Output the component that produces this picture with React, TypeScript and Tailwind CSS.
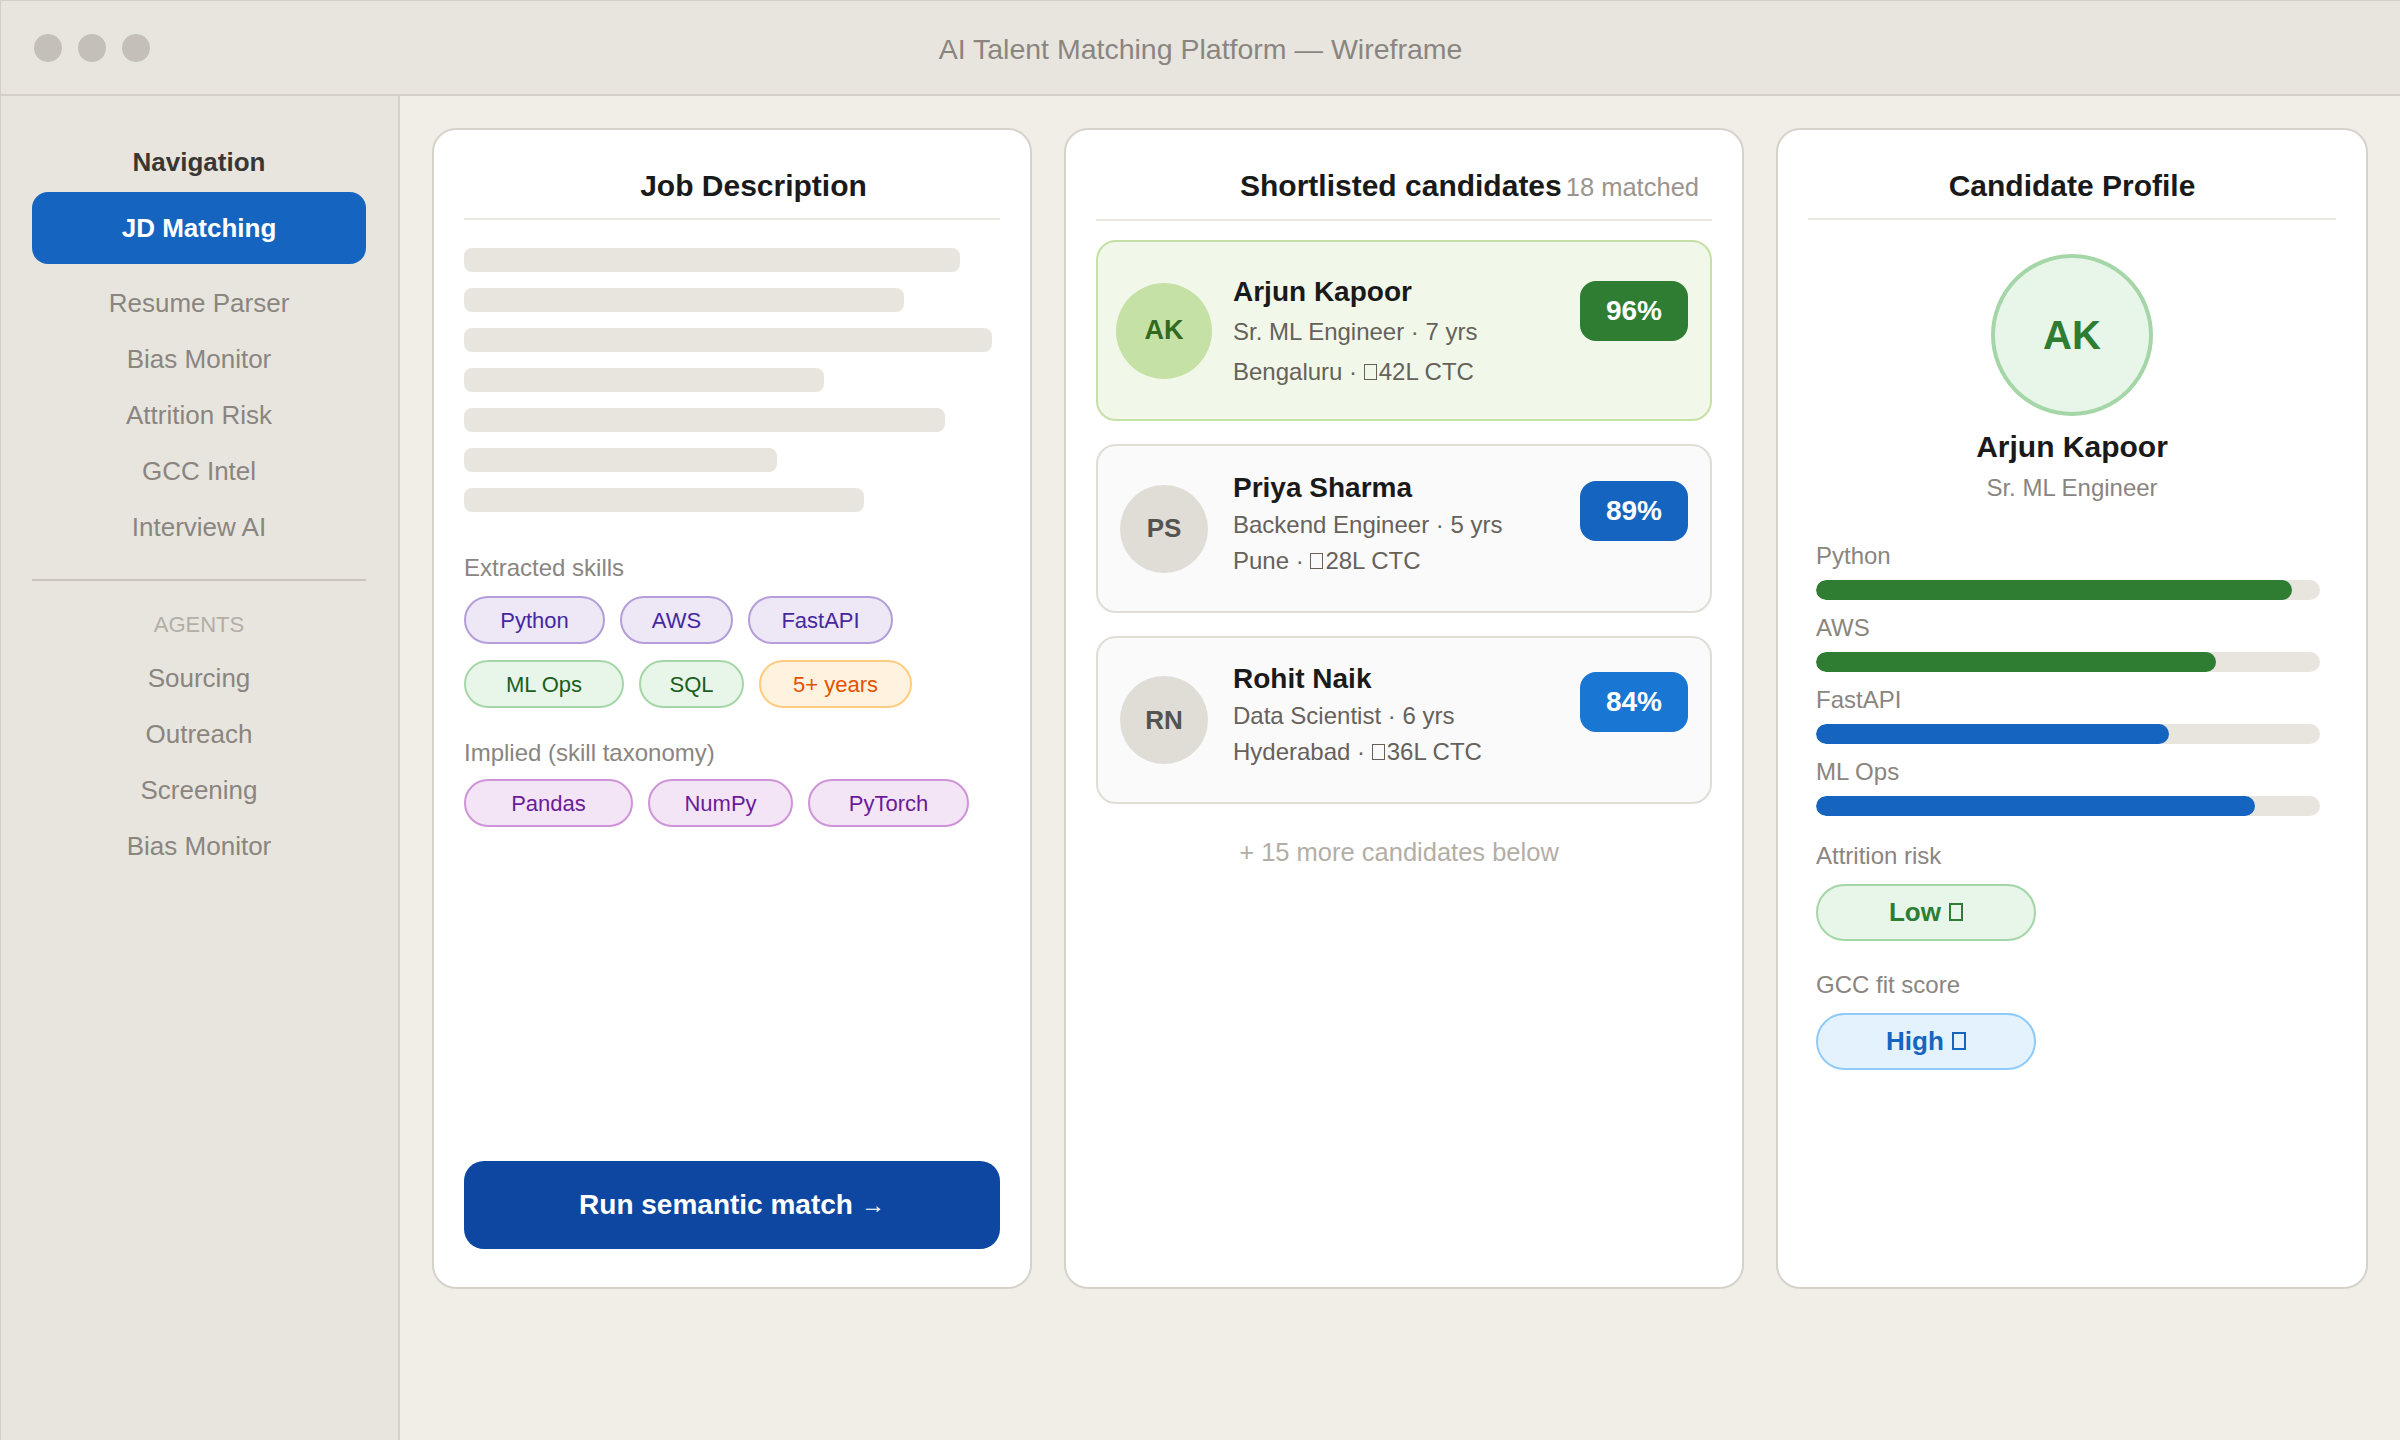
import React from "react";

const navItems = ["Resume Parser", "Bias Monitor", "Attrition Risk", "GCC Intel", "Interview AI"];
const agentItems = ["Sourcing", "Outreach", "Screening", "Bias Monitor"];
const skeleton = [496, 440, 528, 360, 481, 313, 400];

const purple = "bg-[#ede7f6] border-[#b39ddb] text-[#4527a0]";
const green = "bg-[#e8f5e9] border-[#a5d6a7] text-[#1b5e20]";
const orange = "bg-[#fff3e0] border-[#ffcc80] text-[#e65100]";
const violet = "bg-[#f3e5f5] border-[#ce93d8] text-[#6a1b9a]";

const row1 = [
  { t: "Python", w: 141, c: purple },
  { t: "AWS", w: 113, c: purple },
  { t: "FastAPI", w: 145, c: purple },
];
const row2 = [
  { t: "ML Ops", w: 160, c: green },
  { t: "SQL", w: 105, c: green },
  { t: "5+ years", w: 153, c: orange },
];
const row3 = [
  { t: "Pandas", w: 169, c: violet },
  { t: "NumPy", w: 145, c: violet },
  { t: "PyTorch", w: 161, c: violet },
];

const skills = [
  { n: "Python", v: 94.5, c: "bg-[#2e7d32]" },
  { n: "AWS", v: 79.3, c: "bg-[#2e7d32]" },
  { n: "FastAPI", v: 70, c: "bg-[#1565c0]" },
  { n: "ML Ops", v: 87.2, c: "bg-[#1565c0]" },
];

function Chip({ t, w, c }: { t: string; w: number; c: string }) {
  return (
    <div
      className={`h-[48px] rounded-full border-2 flex items-center justify-center text-[22px] ${c}`}
      style={{ width: w }}
    >
      {t}
    </div>
  );
}

/* missing-glyph box, as the reference shows it */
function Tofu({ big }: { big?: boolean }) {
  return big ? (
    <span className="inline-block w-[14px] h-[18px] border-2 border-current align-baseline ml-[1px]" />
  ) : (
    <span className="inline-block w-[13px] h-[16px] border-[1.5px] border-current align-baseline mr-[2px]" />
  );
}

export default function App() {
  return (
    <div className="w-[2400px] h-[1440px] flex flex-col bg-[#f1eee8] font-['Liberation_Sans',Arial,sans-serif] border-t border-l border-[#d3cfc7] overflow-hidden">
      {/* Title bar */}
      <header className="h-[95px] shrink-0 grid grid-cols-[1fr_auto_1fr] items-center bg-[#e8e5df] border-b-2 border-[#d3cfc7] px-[33px]">
        <div className="flex gap-[16px]">
          <span className="w-[28px] h-[28px] rounded-full bg-[#c4c0b9]" />
          <span className="w-[28px] h-[28px] rounded-full bg-[#c4c0b9]" />
          <span className="w-[28px] h-[28px] rounded-full bg-[#c4c0b9]" />
        </div>
        <div className="text-[28.5px] text-[#8a8580] pt-[4px]">AI Talent Matching Platform — Wireframe</div>
        <div />
      </header>

      <div className="flex flex-1 min-h-0">
        {/* Sidebar */}
        <aside className="w-[399px] shrink-0 bg-[#e8e5df] border-r-2 border-[#d6d2ca] pl-[31px] pr-[32px] pt-[48px] flex flex-col">
          <div className="text-[26px] font-bold leading-[36px] text-center text-[#3a3733]">Navigation</div>
          <div className="mt-[12px] h-[72px] rounded-[16px] bg-[#1565c0] text-white font-bold text-[26px] flex items-center justify-center">
            JD Matching
          </div>
          <div className="mt-[11px] flex flex-col">
            {navItems.map((n) => (
              <div key={n} className="h-[56px] flex items-center justify-center text-[26px] text-[#8a8580]">
                {n}
              </div>
            ))}
          </div>
          <div className="mt-[24px] h-[2px] bg-[#c9c4bc]" />
          <div className="mt-[30px] leading-[28px] text-[22px] text-[#b3aea6] text-center">AGENTS</div>
          <div className="mt-[11px] flex flex-col">
            {agentItems.map((n) => (
              <div key={n} className="h-[56px] flex items-center justify-center text-[26px] text-[#8a8580]">
                {n}
              </div>
            ))}
          </div>
        </aside>

        {/* Main */}
        <main className="flex-1 flex items-start gap-[32px] p-[32px]">
          {/* Job Description */}
          <section className="w-[600px] h-[1161px] shrink-0 bg-white border-2 border-[#d6d2ca] rounded-[24px] px-[30px] pt-[38px] pb-[38px] flex flex-col">
            <div className="pl-[43px] text-center text-[30px] font-bold leading-[36px] pb-[14px] border-b-2 border-[#ebe8e2] text-[#1a1a1a]">
              Job Description
            </div>
            <div className="mt-[28px] flex flex-col gap-[16px]">
              {skeleton.map((w, i) => (
                <div key={i} className="h-[24px] rounded-[8px] bg-[#e8e5df]" style={{ width: w }} />
              ))}
            </div>
            <div className="mt-[42px] leading-[28px] text-[24px] text-[#8a8580]">Extracted skills</div>
            <div className="mt-[14px] flex gap-[15px]">
              {row1.map((c) => (
                <Chip key={c.t} {...c} />
              ))}
            </div>
            <div className="mt-[16px] flex gap-[15px]">
              {row2.map((c) => (
                <Chip key={c.t} {...c} />
              ))}
            </div>
            <div className="mt-[31px] leading-[28px] text-[24px] text-[#8a8580]">Implied (skill taxonomy)</div>
            <div className="mt-[12px] flex gap-[15px]">
              {row3.map((c) => (
                <Chip key={c.t} {...c} />
              ))}
            </div>
            <button className="mt-auto h-[88px] w-full rounded-[20px] bg-[#0d47a1] text-white text-[28px] font-bold flex items-center justify-center">
              Run semantic match <span className="ml-[8px] font-normal text-[24px]">→</span>
            </button>
          </section>

          {/* Shortlisted candidates */}
          <section className="flex-1 h-[1161px] bg-white border-2 border-[#d6d2ca] rounded-[24px] px-[30px] pt-[38px] pb-[38px] flex flex-col">
            <div className="flex items-baseline pl-[144px] pb-[14px] border-b-2 border-[#ebe8e2] leading-[36px]">
              <span className="text-[30px] font-bold leading-[36px] text-[#1a1a1a]">Shortlisted candidates</span>
              <span className="ml-[4px] text-[25.5px] leading-[36px] text-[#9a958e]">18 matched</span>
            </div>
            <div className="mt-[19px] flex flex-col gap-[23px]">
              {/* Arjun */}
              <div className="h-[181px] rounded-[20px] border-2 border-[#c5e1a5] bg-[#f1f8e9] flex items-center pl-[18px] pr-[22px]">
                <div className="w-[96px] h-[96px] shrink-0 rounded-full bg-[#c5e1a5] text-[#33691e] font-bold text-[27px] flex items-center justify-center">
                  AK
                </div>
                <div className="ml-[21px] pt-[2px] flex flex-col">
                  <div className="leading-[40px] text-[28px] font-bold text-[#1a1a1a]">Arjun Kapoor</div>
                  <div className="leading-[40px] text-[24px] text-[#66615b]">Sr. ML Engineer · 7 yrs</div>
                  <div className="leading-[40px] text-[24px] text-[#66615b]">
                    Bengaluru · <Tofu />42L CTC
                  </div>
                </div>
                <div className="ml-auto self-start mt-[39px] h-[60px] w-[108px] rounded-[16px] bg-[#2e7d32] text-white font-bold text-[28px] flex items-center justify-center">
                  96%
                </div>
              </div>
              {/* Priya */}
              <div className="h-[169px] rounded-[20px] border-2 border-[#e0ddd7] bg-[#fafafa] flex items-center pl-[22px] pr-[22px]">
                <div className="w-[88px] h-[88px] shrink-0 rounded-full bg-[#e0ddd7] text-[#555350] font-bold text-[26px] flex items-center justify-center">
                  PS
                </div>
                <div className="ml-[25px] pb-[8px] flex flex-col">
                  <div className="leading-[36px] text-[28px] font-bold text-[#1a1a1a]">Priya Sharma</div>
                  <div className="leading-[37px] text-[24px] text-[#66615b]">Backend Engineer · 5 yrs</div>
                  <div className="leading-[36px] text-[24px] text-[#66615b]">
                    Pune · <Tofu />28L CTC
                  </div>
                </div>
                <div className="ml-auto self-start mt-[35px] h-[60px] w-[108px] rounded-[16px] bg-[#1565c0] text-white font-bold text-[28px] flex items-center justify-center">
                  89%
                </div>
              </div>
              {/* Rohit */}
              <div className="h-[168px] rounded-[20px] border-2 border-[#e0ddd7] bg-[#fafafa] flex items-center pl-[22px] pr-[22px]">
                <div className="w-[88px] h-[88px] shrink-0 rounded-full bg-[#e0ddd7] text-[#555350] font-bold text-[26px] flex items-center justify-center">
                  RN
                </div>
                <div className="ml-[25px] pb-[10px] flex flex-col">
                  <div className="leading-[36px] text-[28px] font-bold text-[#1a1a1a]">Rohit Naik</div>
                  <div className="leading-[37px] text-[24px] text-[#66615b]">Data Scientist · 6 yrs</div>
                  <div className="leading-[35px] text-[24px] text-[#66615b]">
                    Hyderabad · <Tofu />36L CTC
                  </div>
                </div>
                <div className="ml-auto self-start mt-[34px] h-[60px] w-[108px] rounded-[16px] bg-[#1976d2] text-white font-bold text-[28px] flex items-center justify-center">
                  84%
                </div>
              </div>
            </div>
            <div className="mt-[33px] leading-[30px] text-[25.5px] text-[#b3aea6] text-center pr-[10px]">
              + 15 more candidates below
            </div>
          </section>

          {/* Candidate Profile */}
          <section className="w-[592px] h-[1161px] shrink-0 bg-white border-2 border-[#d6d2ca] rounded-[24px] px-[30px] pt-[38px] pb-[38px] flex flex-col">
            <div className="text-center text-[30px] font-bold leading-[36px] pb-[14px] border-b-2 border-[#ebe8e2] text-[#1a1a1a]">
              Candidate Profile
            </div>
            <div className="mt-[34px] mx-auto w-[162px] h-[162px] rounded-full border-[4px] border-[#a5d6a7] bg-[#e8f5e9] text-[#2e7d32] font-bold text-[40px] flex items-center justify-center">
              AK
            </div>
            <div className="mt-[13px] text-center text-[30px] font-bold leading-[36px] text-[#1a1a1a]">Arjun Kapoor</div>
            <div className="mt-[9px] text-center text-[24px] leading-[28px] text-[#8a8580]">Sr. ML Engineer</div>
            <div className="mt-[40px] pl-[8px] pr-[16px] flex flex-col gap-[14px]">
              {skills.map((s) => (
                <div key={s.n} className="flex flex-col">
                  <div className="leading-[28px] text-[24px] text-[#8a8580]">{s.n}</div>
                  <div className="mt-[10px] h-[20px] rounded-full bg-[#e8e5df] overflow-hidden">
                    <div className={`h-full rounded-full ${s.c}`} style={{ width: `${s.v}%` }} />
                  </div>
                </div>
              ))}
            </div>
            <div className="px-[8px] flex flex-col">
              <div className="mt-[26px] leading-[28px] text-[24px] text-[#8a8580]">Attrition risk</div>
              <div className="mt-[14px] w-[220px] h-[57px] rounded-full border-2 border-[#a5d6a7] bg-[#e8f5e9] text-[#2e7d32] font-bold text-[26px] flex items-center justify-center">
                <span>
                  Low <Tofu big />
                </span>
              </div>
              <div className="mt-[30px] leading-[28px] text-[24px] text-[#8a8580]">GCC fit score</div>
              <div className="mt-[14px] w-[220px] h-[57px] rounded-full border-2 border-[#90caf9] bg-[#e3f2fd] text-[#1565c0] font-bold text-[26px] flex items-center justify-center">
                <span>
                  High <Tofu big />
                </span>
              </div>
            </div>
          </section>
        </main>
      </div>
    </div>
  );
}
